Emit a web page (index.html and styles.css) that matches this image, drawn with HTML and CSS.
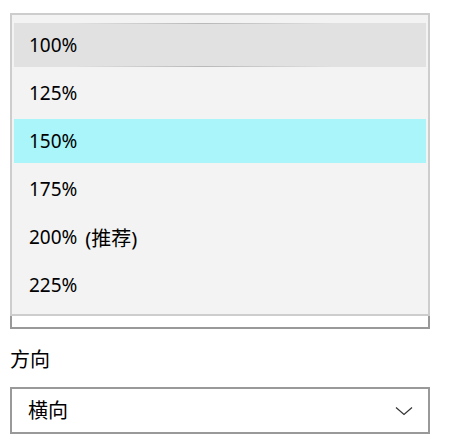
FILE: index.html
```html
<!DOCTYPE html>
<html lang="zh-CN">
<head>
<meta charset="utf-8">
<link rel="stylesheet" href="styles.css">
</head>
<body>
<div class="page">
  <div class="combo-wrap">
    <div class="combo combo-under"></div>
    <ul class="popup">
      <li class="item item-hover">100%</li>
      <li class="item">125%</li>
      <li class="item item-selected">150%</li>
      <li class="item">175%</li>
      <li class="item">200%&nbsp;<span class="cjk">(推荐)</span></li>
      <li class="item">225%</li>
    </ul>
  </div>
  <div class="label">方向</div>
  <div class="combo">
    <span class="combo-text">横向</span>
    <svg class="chevron" width="18" height="10" viewBox="0 0 18 10"><path d="M1 1.5 L9 8.5 L17 1.5" fill="none" stroke="#333" stroke-width="1.2"/></svg>
  </div>
</div>
</body>
</html>
```
FILE: styles.css
```css
html, body {
  margin: 0;
  padding: 0;
  background: #fff;
}
body {
  font-family: "Noto Sans", "Noto Sans CJK SC", sans-serif;
  font-size: 19px;
  color: #000;
}
.page {
  width: 420px;
  padding-left: 10px;
  padding-top: 282px;
}
.combo-wrap {
  position: relative;
}
.combo {
  box-sizing: border-box;
  height: 47px;
  border: 2px solid #999;
  background: #fff;
  display: flex;
  align-items: center;
  padding: 0 15px 0 16px;
}
.combo-text {
  flex: 1;
  line-height: 1;
  font-size: 20px;
}
.chevron {
  display: block;
}
.popup {
  position: absolute;
  left: 0;
  top: -269px;
  width: 420px;
  box-sizing: border-box;
  margin: 0;
  list-style: none;
  background: #f3f3f3;
  border: 2px solid #cdcdcd;
  padding: 6px 2px 5px 2px;
}
.item {
  box-sizing: border-box;
  height: 48px;
  border-top: 2px solid transparent;
  border-bottom: 2px solid transparent;
  background-clip: padding-box;
  display: flex;
  align-items: center;
  padding-left: 15px;
  position: relative;
}
.cjk {
  font-size: 20px;
  margin-left: 3px;
}
.item-hover {
  background-color: #e1e1e1;
}
.item-hover::before,
.item-hover::after {
  content: "";
  position: absolute;
  left: 60px;
  width: 260px;
  height: 1px;
  background: linear-gradient(to right, rgba(0,0,0,0), rgba(0,0,0,0.18), rgba(0,0,0,0));
}
.item-hover::before { top: 0; }
.item-hover::after { bottom: 0; }
.item-selected {
  background-color: #a9f5f9;
}
.label {
  margin-top: 18px;
  margin-bottom: 14px;
  height: 26px;
  line-height: 26px;
  font-size: 20px;
}
```
